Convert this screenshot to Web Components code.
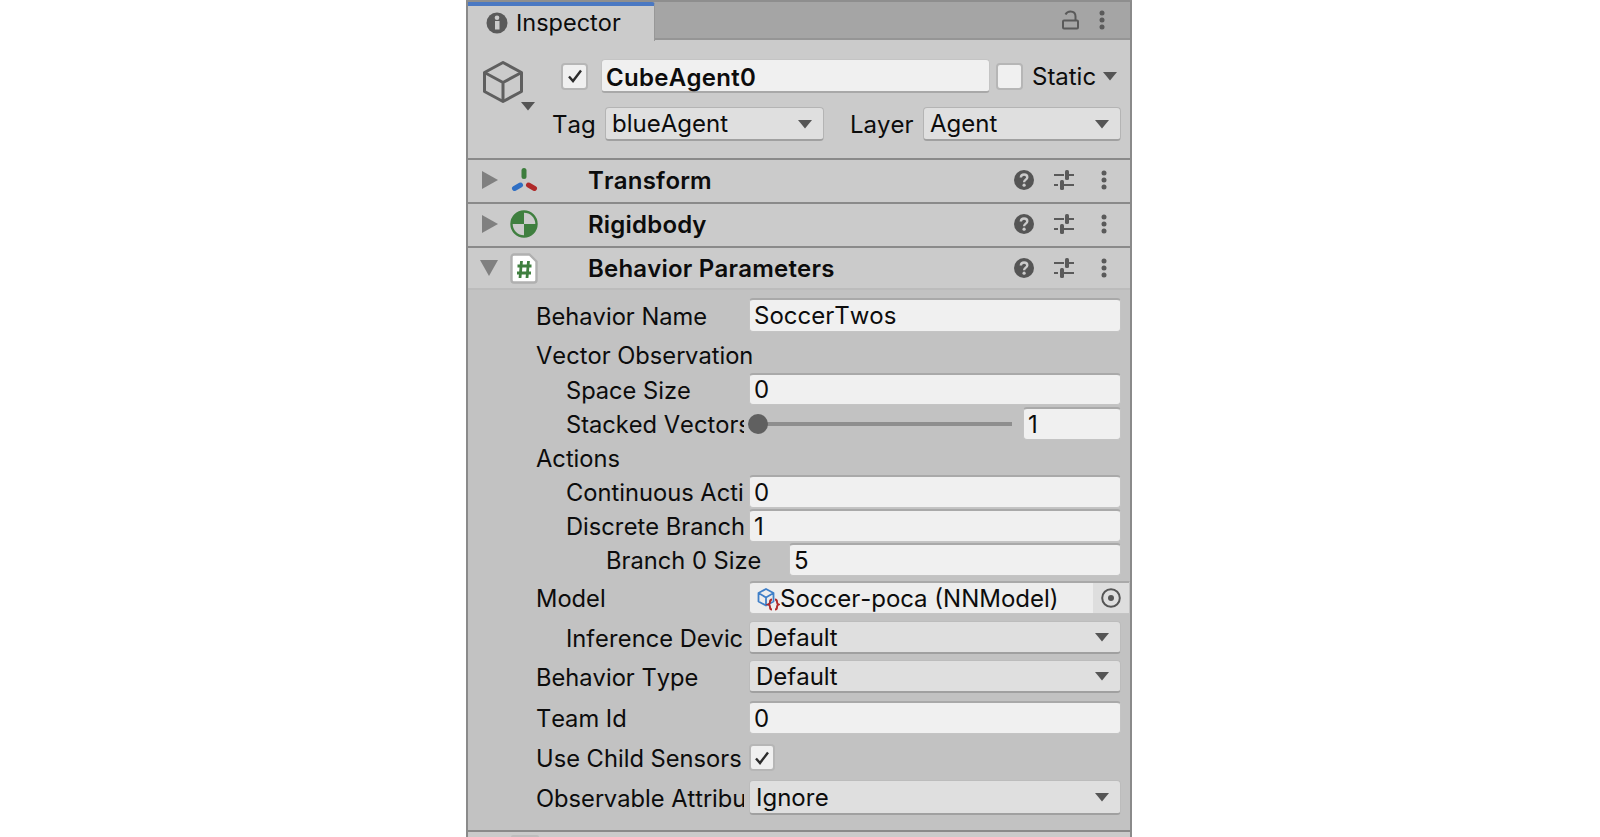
<!DOCTYPE html>
<html>
<head>
<meta charset="utf-8">
<style>
  html, body { margin: 0; height: 837px; overflow: hidden; background: #fff; }
  body { padding-left: 466px; font-family: Inter, "Liberation Sans", sans-serif; }
</style>
</head>
<body>
<inspector-panel>
  <inspector-tabbar></inspector-tabbar>
  <object-header name="CubeAgent0" tag="blueAgent" layer="Agent"></object-header>
  <component-header title="Transform" icon="transform"></component-header>
  <component-header title="Rigidbody" icon="rigidbody"></component-header>
  <component-header title="Behavior Parameters" icon="script" open></component-header>
  <component-body>
    <inspector-field label="Behavior Name" kind="text" value="SoccerTwos" style="--h:34px"></inspector-field>
    <inspector-field label="Vector Observation" style="--h:33px;--mt:6px"></inspector-field>
    <inspector-field label="Space Size" indent="1" kind="text" value="0" style="--h:32px;--mt:2px"></inspector-field>
    <inspector-field label="Stacked Vectors" indent="1" kind="slider" value="1" style="--h:33px;--mt:2px"></inspector-field>
    <inspector-field label="Actions" style="--h:33px;--mt:1px"></inspector-field>
    <inspector-field label="Continuous Actions" indent="1" kind="text" value="0" style="--h:33px;--mt:1px"></inspector-field>
    <inspector-field label="Discrete Branches" indent="1" kind="text" value="1" style="--h:33px;--mt:1px"></inspector-field>
    <inspector-field label="Branch 0 Size" indent="2" kind="text" value="5" style="--h:33px;--mt:1px"></inspector-field>
    <inspector-field label="Model" kind="object" value="Soccer-poca (NNModel)" style="--h:33px;--mt:5px"></inspector-field>
    <inspector-field label="Inference Device" indent="1" kind="select" value="Default" style="--h:33px;--mt:7px"></inspector-field>
    <inspector-field label="Behavior Type" kind="select" value="Default" style="--h:33px;--mt:6px"></inspector-field>
    <inspector-field label="Team Id" kind="text" value="0" style="--h:33px;--mt:8px"></inspector-field>
    <inspector-field label="Use Child Sensors" kind="check" style="--h:29px;--mt:9px"></inspector-field>
    <inspector-field label="Observable Attribute Handling" kind="select" value="Ignore" style="--h:35px;--mt:8px"></inspector-field>
  </component-body>
  <component-stub></component-stub>
</inspector-panel>

<script>
// shared little icons
const CARET = `<svg width="16" height="10" viewBox="0 0 16 10"><path d="M1 1h14L8 9.5z" fill="#555"/></svg>`;
const CHECK = `<svg width="16" height="14" viewBox="0 0 16 14"><path d="M2 7.500l4 4.500 8-10.500" fill="none" stroke="#2c2c2c" stroke-width="2.400"/></svg>`;
const DOTS = `<svg width="8" height="20" viewBox="0 0 8 20"><g fill="#5a5a5a"><circle cx="4" cy="3" r="2.500"/><circle cx="4" cy="10" r="2.500"/><circle cx="4" cy="17" r="2.500"/></g></svg>`;

const COMPONENT_ICONS = {
    transform: `<svg width="28" height="28" viewBox="0 0 28 28" fill="none" stroke-width="5" stroke-linecap="round"><path d="M14 4.500v6" stroke="#3c7d3c"/><path d="M4.500 22.500l6-3.500" stroke="#2f6fc4"/><path d="M24.500 22.500l-6-3.500" stroke="#b02a2a"/></svg>`,
    rigidbody: `<svg width="28" height="28" viewBox="0 0 28 28"><circle cx="14" cy="14" r="12.500" fill="#cbcbcb" stroke="#3f7f3f" stroke-width="2.400"/><path d="M14 14V1.500A12.500 12.500 0 0 0 1.500 14zM14 14v12.500A12.500 12.500 0 0 0 26.500 14z" fill="#3f7f3f"/></svg>`,
    script: `<svg width="28" height="31" viewBox="0 0 28 31"><path d="M4 1.500h15.500l7 7V27a2.500 2.500 0 0 1-2.500 2.500H4A2.500 2.500 0 0 1 1.500 27V4A2.500 2.500 0 0 1 4 1.500z" fill="#fff" stroke="#b0b0b0" stroke-width="2.400" stroke-linejoin="round"/><path d="M11.500 8l-1.500 17M18.500 8l-1.500 17M7.500 13h14M7 20h14" stroke="#3f7f3f" stroke-width="2.800" fill="none"/></svg>`
};

class InspectorPanel extends HTMLElement {
    constructor() {
        super();
        this.attachShadow({ mode: 'open' });
        this.shadowRoot.innerHTML = `
            <style>
                :host {
                    display: block;
                    width: 662px;
                    height: 835px;
                    background: #cbcbcb;
                    border-top: 2px solid #8e8e8e;
                    border-left: 2px solid #8a8a8a;
                    border-right: 2px solid #8a8a8a;
                    color: #0c0c0c;
                    font-size: 24px;
                    font-kerning: none;
                    overflow: hidden;
                }
            </style>
            <slot></slot>
        `;
    }
}

class InspectorTabbar extends HTMLElement {
    constructor() {
        super();
        this.attachShadow({ mode: 'open' });
        this.shadowRoot.innerHTML = `
            <style>
                :host {
                    display: flex;
                    height: 36px;
                    background: #a5a5a5;
                    border-bottom: 2px solid #959595;
                }
                .tab {
                    width: 187px;
                    box-sizing: border-box;
                    background: #cbcbcb;
                    border-top: 4px solid #4a78c2;
                    border-right: 1px solid #989898;
                    border-top-right-radius: 3px;
                    display: flex;
                    align-items: center;
                    gap: 8px;
                    padding-left: 18px;
                    margin-bottom: -3px;
                    position: relative;
                    z-index: 1;
                    height: 39px;
                    font-size: 23.5px;
                }
                .tab span { position: relative; top: -1px; }
                .tools {
                    margin-left: auto;
                    display: flex;
                    align-items: center;
                    gap: 19px;
                    padding-right: 24px;
                }
            </style>
            <div class="tab">
                <svg width="22" height="22" viewBox="0 0 22 22" style="position:relative;top:-1px"><circle cx="11" cy="11" r="10.500" fill="#5a5a5a"/><rect x="9" y="9" width="4.500" height="8.500" fill="#cbcbcb"/><circle cx="11" cy="5.800" r="2.300" fill="#cbcbcb"/></svg>
                <span>Inspector</span>
            </div>
            <div class="tools">
                <svg width="18" height="20" viewBox="0 0 18 20" fill="none" stroke="#5a5a5a" stroke-width="2"><rect x="2" y="10.500" width="15" height="8" rx="1"/><path d="M4.500 4.500C5.500 2.500 7 1.500 9.500 1.500c3 0 5 2 5 5v4"/></svg>
                ${DOTS}
            </div>
        `;
    }
}

class ObjectHeader extends HTMLElement {
    constructor() {
        super();
        this.attachShadow({ mode: 'open' });
    }

    connectedCallback() {
        const name = this.getAttribute('name') || '';
        const tag = this.getAttribute('tag') || '';
        const layer = this.getAttribute('layer') || '';
        this.shadowRoot.innerHTML = `
            <style>
                :host {
                    display: block;
                    box-sizing: border-box;
                    height: 120px;
                    padding-top: 19px;
                    border-bottom: 2px solid #8a8a8a;
                    position: relative;
                }
                .row { display: flex; align-items: center; }
                .first { height: 34px; padding-left: 93px; }
                .second { height: 34px; margin-top: 14px; padding-left: 84px; }
                .check {
                    width: 27px;
                    height: 27px;
                    box-sizing: border-box;
                    background: #f0f0f0;
                    border: 2px solid #b6b6b6;
                    border-radius: 4px;
                    display: flex;
                    align-items: center;
                    justify-content: center;
                }
                .name {
                    width: 389px;
                    height: 34px;
                    box-sizing: border-box;
                    margin-left: 13px;
                    background: #f0f0f0;
                    border: 1px solid #c4c4c4;
                    border-bottom: 2px solid #a8a8a8;
                    border-radius: 4px;
                    padding-left: 4px;
                    font-weight: 600;
                    letter-spacing: .3px;
                    line-height: 35px;
                }
                .static { margin-left: 6px; }
                .static-label { margin-left: 9px; }
                .caret { margin-left: 6px; display: flex; }
                .drop {
                    height: 34px;
                    box-sizing: border-box;
                    background: #dfdfdf;
                    border: 1px solid #b4b4b4;
                    border-bottom: 2px solid #a0a0a0;
                    border-radius: 4px;
                    display: flex;
                    align-items: center;
                    justify-content: space-between;
                    padding: 0 10px 0 6px;
                    line-height: 1;
                }
                .tag-label { width: 43px; flex: none; }
                .tag { width: 219px; margin-left: 10px; }
                .layer-label { margin-left: 26px; width: 64px; flex: none; }
                .layer { width: 198px; margin-left: 9px; }
                .cube { position: absolute; left: 15px; top: 21px; display: block; }
                .cube-caret { position: absolute; left: 52px; top: 61px; display: flex; }
            </style>
            <svg class="cube" width="40" height="42" viewBox="0 0 40 42" fill="none" stroke="#5f5f5f" stroke-width="3" stroke-linejoin="round"><path d="M20 1.500L38.500 11.500V30.500L20 40.500 1.500 30.500V11.500z"/><path d="M1.500 11.500L20 21.500l18.500-10M20 21.500v19"/></svg>
            <span class="cube-caret">${CARET}</span>
            <div class="row first">
                <span class="check">${CHECK}</span>
                <div class="name">${name}</div>
                <span class="check static"></span>
                <span class="static-label">Static</span>
                <span class="caret">${CARET}</span>
            </div>
            <div class="row second">
                <span class="tag-label">Tag</span>
                <div class="drop tag"><span>${tag}</span>${CARET}</div>
                <span class="layer-label">Layer</span>
                <div class="drop layer"><span>${layer}</span>${CARET}</div>
            </div>
        `;
    }
}

class ComponentHeader extends HTMLElement {
    constructor() {
        super();
        this.attachShadow({ mode: 'open' });
    }

    connectedCallback() {
        const title = this.getAttribute('title') || '';
        const icon = this.getAttribute('icon') || 'script';
        const open = this.hasAttribute('open');
        const arrow = open
            ? `<svg width="18" height="16" viewBox="0 0 18 16"><path d="M0 0h18L9 16z" fill="#808080"/></svg>`
            : `<svg width="16" height="18" viewBox="0 0 16 18"><path d="M0 0l16 9L0 18z" fill="#808080"/></svg>`;
        this.shadowRoot.innerHTML = `
            <style>
                :host {
                    display: flex;
                    align-items: center;
                    box-sizing: border-box;
                    height: 44px;
                    padding-bottom: 2px;
                    border-bottom: 2px solid #8a8a8a;
                }
                :host([open]) {
                    height: 42px;
                    padding-bottom: 0;
                    border-bottom: 2px solid #bcbcbc;
                }
                .arrow { width: 42px; display: flex; padding-left: ${open ? 12 : 14}px; box-sizing: border-box; }
                .icon { width: 78px; display: flex; }
                .title { font-weight: 600; flex: 1; letter-spacing: .2px; }
                .tools { display: flex; align-items: center; padding-right: 22px; }
                .tools svg { display: block; }
                .help { margin-right: 20px; }
                .sliders { margin-right: 26px; }
            </style>
            <span class="arrow">${arrow}</span>
            <span class="icon">${COMPONENT_ICONS[icon]}</span>
            <span class="title">${title}</span>
            <span class="tools">
                <svg class="help" width="20" height="20" viewBox="0 0 20 20"><circle cx="10" cy="10" r="10" fill="#555"/><path d="M6.800 7.500C7 5.500 8.400 4.500 10.100 4.500c1.800 0 3.200 1.100 3.200 2.700 0 2.400-3.200 2.500-3.200 5" fill="none" stroke="#cbcbcb" stroke-width="2.400"/><circle cx="10.100" cy="15.200" r="1.600" fill="#cbcbcb"/></svg>
                <svg class="sliders" width="20" height="20" viewBox="0 0 20 20"><g fill="#5a5a5a"><rect x="0" y="4" width="10" height="2"/><rect x="11" y="0" width="4" height="10" rx="1.500"/><rect x="15" y="4" width="5" height="2"/><rect x="0" y="14" width="4" height="2"/><rect x="6" y="10" width="4" height="10" rx="1.500"/><rect x="10" y="14" width="10" height="2"/></g></svg>
                ${DOTS}
            </span>
        `;
    }
}

class ComponentBody extends HTMLElement {
    constructor() {
        super();
        this.attachShadow({ mode: 'open' });
        this.shadowRoot.innerHTML = `
            <style>
                :host {
                    display: block;
                    box-sizing: border-box;
                    height: 542px;
                    padding-top: 8px;
                    background: #c2c2c2;
                    border-bottom: 2px solid #8a8a8a;
                }
            </style>
            <slot></slot>
        `;
    }
}

class InspectorField extends HTMLElement {
    constructor() {
        super();
        this.attachShadow({ mode: 'open' });
    }

    control(kind, value) {
        if (kind === 'text') return `<div class="box text">${value}</div>`;
        if (kind === 'select') return `<div class="box select"><span>${value}</span>${CARET}</div>`;
        if (kind === 'check') return `<div class="checkbox">${CHECK}</div>`;
        if (kind === 'slider') {
            return `<div class="slider"><span class="track"><i class="thumb"></i></span><div class="box text number">${value}</div></div>`;
        }
        if (kind === 'object') {
            return `<div class="box object">
                <svg width="23" height="26" viewBox="0 0 23 26" fill="none"><path d="M9 4l7.500 4v8.500L9 20.500l-7.500-4V8zM1.500 8L9 12.500 16.500 8M9 12.500v8" stroke="#3f7fc8" stroke-width="1.800" stroke-linejoin="round"/><path d="M15 14.500c-2 0-2 1-2 2.500s0 2-1.500 2.500c1.500.5 1.500 1 1.500 2.500s0 2.500 2 2.500M18 14.500c2 0 2 1 2 2.500s0 2 1.500 2.500c-1.500.5-1.500 1-1.500 2.500s0 2.500-2 2.500" stroke="#b02a2a" stroke-width="2"/></svg>
                <span class="object-name">${value}</span>
                <span class="picker"><svg width="20" height="20" viewBox="0 0 20 20"><circle cx="10" cy="10" r="8.800" fill="none" stroke="#555" stroke-width="2"/><circle cx="10" cy="10" r="3" fill="#555"/></svg></span>
            </div>`;
        }
        return '';
    }

    connectedCallback() {
        const label = this.getAttribute('label') || '';
        const indent = parseInt(this.getAttribute('indent') || '0', 10);
        const kind = this.getAttribute('kind') || '';
        const value = this.getAttribute('value') || '';
        const left = [68, 98, 138][indent];
        // the label column runs up to x=749, branch sizes are pushed right
        const labelWidth = indent === 2 ? 321 : 281;
        this.shadowRoot.innerHTML = `
            <style>
                :host {
                    display: flex;
                    align-items: center;
                    height: var(--h, 33px);
                    margin-top: var(--mt, 0);
                    padding-right: 9px;
                }
                .label {
                    width: ${kind ? labelWidth : 592}px;
                    flex: none;
                    box-sizing: border-box;
                    padding-left: ${left}px;
                    padding-top: 2px;
                    font-size: 23.7px;
                    white-space: nowrap;
                }
                .clip { display: block; overflow: hidden; margin-right: 5px; }
                .box {
                    flex: 1;
                    height: 100%;
                    box-sizing: border-box;
                    border-radius: 4px;
                    display: flex;
                    align-items: center;
                    white-space: nowrap;
                }
                .text {
                    background: #f0f0f0;
                    border: 1px solid #c4c4c4;
                    border-top: 2px solid #a9a9a9;
                    padding-left: 4px;
                }
                .select {
                    background: #dfdfdf;
                    border: 1px solid #bcbcbc;
                    border-bottom: 2px solid #a0a0a0;
                    justify-content: space-between;
                    padding: 0 10px 0 6px;
                }
                .checkbox {
                    width: 26px;
                    height: 27px;
                    box-sizing: border-box;
                    background: #f0f0f0;
                    border: 2px solid #b6b6b6;
                    border-radius: 4px;
                    display: flex;
                    align-items: center;
                    justify-content: center;
                }
                .slider { flex: 1; display: flex; align-items: center; height: 100%; }
                .track {
                    width: 254px;
                    margin-left: 9px;
                    height: 4px;
                    background: #8e8e8e;
                    position: relative;
                }
                .thumb {
                    position: absolute;
                    left: -10px;
                    top: -8px;
                    width: 20px;
                    height: 20px;
                    border-radius: 50%;
                    background: #606060;
                }
                .number { flex: none; width: 98px; margin-left: 11px; }
                .object {
                    background: #ededed;
                    border: 1px solid #c4c4c4;
                    border-top: 2px solid #a9a9a9;
                    padding-left: 7px;
                    margin-right: -9px;
                    overflow: hidden;
                    border-top-right-radius: 0;
                    border-bottom-right-radius: 0;
                }
                .object-name { flex: 1; }
                .picker {
                    width: 36px;
                    align-self: stretch;
                    background: #dedede;
                    display: flex;
                    align-items: center;
                    justify-content: center;
                }
            </style>
            <div class="label"><span class="clip">${label}</span></div>
            ${this.control(kind, value)}
        `;
    }
}

class ComponentStub extends HTMLElement {
    constructor() {
        super();
        this.attachShadow({ mode: 'open' });
        this.shadowRoot.innerHTML = `
            <style>
                :host { display: block; height: 5px; padding: 3px 0 0 43px; }
                .top { width: 28px; height: 2px; background: #bdbdbd; border-radius: 3px 3px 0 0; }
            </style>
            <div class="top"></div>
        `;
    }
}

customElements.define('inspector-panel', InspectorPanel);
customElements.define('inspector-tabbar', InspectorTabbar);
customElements.define('object-header', ObjectHeader);
customElements.define('component-header', ComponentHeader);
customElements.define('component-body', ComponentBody);
customElements.define('inspector-field', InspectorField);
customElements.define('component-stub', ComponentStub);
</script>
</body>
</html>
